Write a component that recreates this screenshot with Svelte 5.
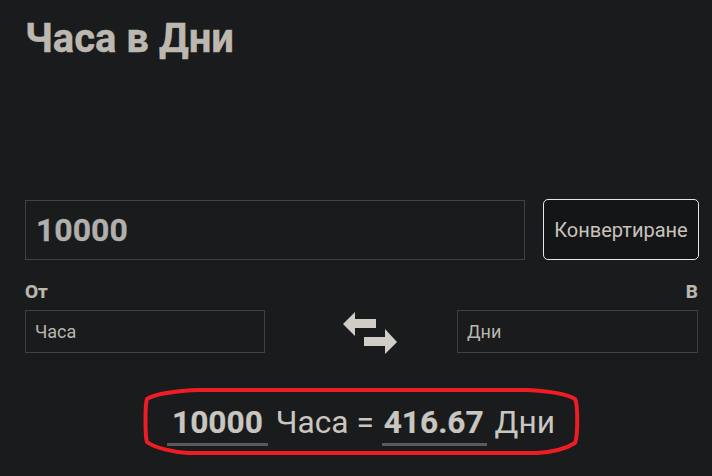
<script>
  let hours = "10000";
  let days = "416.67";
</script>

<main class="page">
  <h1>Часа в Дни</h1>

  <div class="top-row">
    <div class="amount">{hours}</div>
    <button class="convert">Конвертиране</button>
  </div>

  <div class="units">
    <div class="unit">
      <span class="label">От</span>
      <div class="select">Часа</div>
    </div>
    <div class="swap">
      <svg width="54" height="44" viewBox="0 0 54 44">
        <path d="M0 13 L12 1 L12 8 L33 8 L33 17 L12 17 L12 25 Z" />
        <path d="M54 31 L42 18 L42 26 L21 26 L21 35 L42 35 L42 43 Z" />
      </svg>
    </div>
    <div class="unit right">
      <span class="label">В</span>
      <div class="select">Дни</div>
    </div>
  </div>

  <div class="result">
    <span class="num first">{hours}</span> Часа = <span class="num second">{days}</span> Дни
    <svg class="oval" width="440" height="72" viewBox="0 0 440 72">
      <path d="M54 4 H384 C405 5 424 8 432 13 C435 18 435 50 432 57 C424 62 410 66 394 67 H45 C30 66 12 62 4 56 C2 50 2 18 4 13 C12 8 35 5 54 4 Z" />
    </svg>
  </div>
</main>

<style>
  :global(body) {
    margin: 0;
    background: #191b1d;
  }
  .page {
    box-sizing: border-box;
    height: 476px;
    padding: 0 13px 0 25px;
    font-family: Roboto, "Noto Sans", sans-serif;
    color: #bcb8b0;
    overflow: hidden;
  }
  h1 {
    margin: 0;
    padding-top: 16px;
    height: 199px;
    box-sizing: border-box;
    font-size: 40px;
    line-height: 46px;
    font-weight: 700;
    -webkit-text-stroke: 0.4px currentColor;
  }
  .top-row {
    display: flex;
    align-items: center;
    gap: 18px;
  }
  .amount {
    box-sizing: border-box;
    width: 500px;
    height: 60px;
    padding: 0 10px;
    border: 1px solid #3f4143;
    font-size: 32px;
    font-weight: 700;
    line-height: 58px;
    color: #b0afac;
    -webkit-text-stroke: 0.3px currentColor;
  }
  .convert {
    box-sizing: border-box;
    width: 156px;
    height: 61px;
    padding: 0;
    background: #141517;
    border: 1px solid #e8e6e3;
    border-radius: 5px;
    font-family: inherit;
    font-size: 20px;
    color: #c8c4bc;
  }
  .units {
    display: flex;
    justify-content: space-between;
    margin: 20px 1px 0 0;
  }
  .unit {
    width: 240px;
  }
  .unit.right {
    width: 241px;
    text-align: right;
  }
  .label {
    display: block;
    height: 30px;
    font-size: 19px;
    font-weight: 700;
    line-height: 23px;
    -webkit-text-stroke: 0.2px currentColor;
  }
  .select {
    box-sizing: border-box;
    height: 43px;
    padding: 0 9px;
    border: 1px solid #3f4143;
    font-size: 18px;
    line-height: 41px;
    text-align: left;
    color: #b9b6b0;
  }
  .swap {
    display: flex;
    align-items: flex-end;
  }
  .swap svg {
    display: block;
    margin: 0 0 -2px 17px;
  }
  .swap path {
    fill: #d0cdc7;
  }
  .result {
    position: relative;
    width: fit-content;
    margin: 48px auto 0;
    padding-right: 2px;
    font-size: 31.7px;
    line-height: 44px;
    white-space: nowrap;
    color: #c9c6c0;
  }
  .num {
    display: inline-block;
    border-bottom: 3px solid #5a5a5a;
    font-weight: 700;
    line-height: 40px;
    -webkit-text-stroke: 0.2px currentColor;
  }
  .num.first {
    padding: 0 5px;
  }
  .num.second {
    padding: 0 3px 0 2px;
  }
  .oval {
    position: absolute;
    left: -24px;
    top: -15px;
    pointer-events: none;
  }
  .oval path {
    fill: none;
    stroke: #ee1c25;
    stroke-width: 4;
  }
</style>
